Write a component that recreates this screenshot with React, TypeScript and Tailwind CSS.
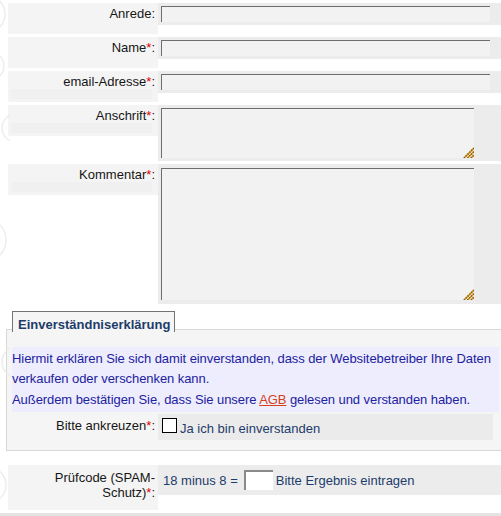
import React from "react";

const Req = () => <span className="text-[#e60000]">*</span>;

function Grip() {
  return (
    <svg className="pointer-events-none absolute right-0 bottom-0" width="11" height="11" viewBox="0 0 11 11">
      <path d="M1 11L11 1M4.5 11L11 4.5M8 11L11 8" stroke="#d6961c" strokeWidth="1.6" />
      <path d="M1 11L11 1M4.5 11L11 4.5M8 11L11 8" stroke="#7a5510" strokeWidth="1.6" strokeDasharray="1 1.6" />
    </svg>
  );
}

function Label({ text, req, note, h = "h-[31px]" }: { text: string; req?: boolean; note?: boolean; h?: string }) {
  return (
    <div className={`${h} w-[150px] shrink-0 bg-[#f4f4f4] pt-[3px] pr-[3px] text-right leading-[15px]`}>
      {text}
      {req && <Req />}:
      {note && <div className="mx-[3px] h-[10px] bg-[#f0f0f0]" />}
    </div>
  );
}

function InputRow({ label, req, note }: { label: string; req?: boolean; note?: boolean }) {
  return (
    <div className="flex items-start">
      <Label text={label} req={req} note={note} />
      <div className="flex-1 bg-[#ececec] p-[3px]">
        <input className="block h-[16px] w-[329px] border-t border-l border-[#6e6e6e] bg-[#f2f2f2] outline-none" />
      </div>
    </div>
  );
}

function AreaRow({ label, height, pad }: { label: string; height: string; pad: string }) {
  return (
    <div className="flex items-start">
      <Label text={label} req note />
      <div className={`flex-1 bg-[#ececec] pl-[3px] ${pad}`}>
        <div className={`relative w-[313px] ${height}`}>
          <textarea className="block h-full w-full resize-none border-t border-l border-[#6e6e6e] bg-[#f2f2f2] outline-none" />
          <Grip />
        </div>
      </div>
    </div>
  );
}

function Decor() {
  return (
    <svg className="pointer-events-none absolute top-0 left-0" width="10" height="516" viewBox="0 0 10 516" fill="none" stroke="#ebebeb" strokeWidth="1.3">
      <circle cx="-14" cy="14" r="19" />
      <circle cx="-10" cy="66" r="14" />
      <circle cx="16" cy="128" r="14" />
      <circle cx="-16" cy="240" r="22" />
      <circle cx="18" cy="362" r="16" />
      <circle cx="-12" cy="485" r="18" />
    </svg>
  );
}

export default function App() {
  return (
    <div className="relative h-[516px] w-[501px] overflow-hidden bg-white font-['Liberation_Sans',Arial,sans-serif] text-[13px] text-[#161616]">
      <Decor />
      <div className="flex flex-col gap-[3px] pt-[3px] pl-[8px]">
        <InputRow label="Anrede" />
        <InputRow label="Name" req />
        <InputRow label="email-Adresse" req note />
        <AreaRow label="Anschrift" height="h-[50px]" pad="pt-[3px] pb-[3px]" />
        <AreaRow label="Kommentar" height="h-[132px]" pad="pt-[4px] pb-[4px]" />
      </div>

      {/* Einverständnis */}
      <div className="mt-[7px] pl-[6px]">
        <div className="relative z-10 -mb-[3px] ml-[6px] h-[21px] w-[163px] border border-b-0 border-[#737373] bg-[#f5f5f5] pt-[5px] pl-[5px] leading-[15px] font-bold text-[#1d3c6b]">
          Einverständniserklärung
        </div>
        <div className="h-[122px] border border-r-0 border-[#d8d8d8] bg-[#f5f5f5] pt-[17px] pl-[5px]">
          <div className="mr-[2px] bg-[#ededfd] pt-[2px] pb-[2px] leading-[20px] tracking-[-0.07px] text-[#2222a0]">
            <p>
              Hiermit erklären Sie sich damit einverstanden, dass der Websitebetreiber Ihre Daten verkaufen oder verschenken kann.
            </p>
            <p className="mt-[1px]">
              Außerdem bestätigen Sie, dass Sie unsere <span className="text-[#d4401a] underline">AGB</span> gelesen und verstanden haben.
            </p>
          </div>
          <div className="mt-[2px] -ml-[4px] flex items-start">
            <div className="w-[150px] shrink-0 pt-[4px] pr-[3px] text-right leading-[15px]">
              Bitte ankreuzen<Req />:
            </div>
            <div className="h-[26px] w-[335px] bg-[#ebebeb] pt-[4px] pl-[4px] leading-[15px] text-[#1d3c6b]">
              <span className="mr-[3px] inline-block h-[15px] w-[15px] border border-black bg-white align-baseline" />
              Ja ich bin einverstanden
            </div>
          </div>
        </div>
      </div>

      {/* Prüfcode */}
      <div className="mt-[14px] flex items-start pl-[8px]">
        <div className="h-[45px] w-[150px] shrink-0 bg-[#f4f4f4] pt-[5px] pr-[3px] text-right leading-[15px]">
          Prüfcode (SPAM-Schutz)<Req />:
        </div>
        <div className="flex h-[30px] flex-1 items-center bg-[#ececec] pl-[5px] leading-[15px] text-[#1d3c6b]">
          <span>18 minus 8 =</span>
          <input className="ml-[6px] block h-[20px] w-[29px] border-t-2 border-l-2 border-[#8a8a8a] bg-white outline-none" />
          <span className="ml-[3px]">Bitte Ergebnis eintragen</span>
        </div>
      </div>

      <div className="mt-[3px] h-[10px] bg-[#e3e3e3]" />
    </div>
  );
}
